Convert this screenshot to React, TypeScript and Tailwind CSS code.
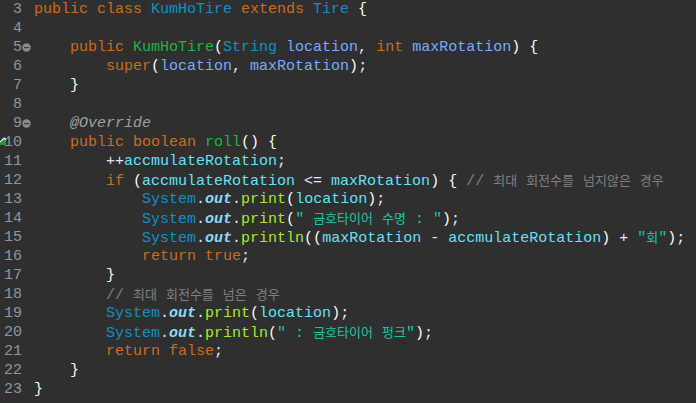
import React from "react";

type Tok = [string, string?];

const kw = "text-[#cc6c1d]";
const cls = "text-[#1290c3]";
const mdecl = "text-[#1eb540]";
const mcall = "text-[#a7ec21]";
const field = "text-[#66e1f8]";
const sfield = "text-[#8ddaf8] italic font-bold";
const param = "text-[#79abff]";
const str = "text-[#17c6a3]";
const cmt = "text-[#808080]";
const ann = "text-[#a0a0a0] italic";
const br = "text-[#f9faf4]";
const op = "text-[#e6e6fa]";

const lines: { n: number; fold?: boolean; mark?: boolean; toks: Tok[] }[] = [
  { n: 3, toks: [["public class ", kw], ["KumHoTire", cls], [" "], ["extends ", kw], ["Tire", cls], [" "], ["{", br]] },
  { n: 4, toks: [] },
  {
    n: 5,
    fold: true,
    toks: [
      ["    "], ["public ", kw], ["KumHoTire", mdecl], ["(", br], ["String", cls], [" "], ["location", param],
      [", ", op], ["int ", kw], ["maxRotation", param], [")", br], [" "], ["{", br],
    ],
  },
  { n: 6, toks: [["        "], ["super", kw], ["(", br], ["location", param], [", ", op], ["maxRotation", param], [")", br], [";", op]] },
  { n: 7, toks: [["    "], ["}", br]] },
  { n: 8, toks: [] },
  { n: 9, fold: true, toks: [["    "], ["@Override", ann]] },
  { n: 10, mark: true, toks: [["    "], ["public boolean ", kw], ["roll", mdecl], ["()", br], [" "], ["{", br]] },
  { n: 11, toks: [["        "], ["++", op], ["accmulateRotation", field], [";", op]] },
  {
    n: 12,
    toks: [
      ["        "], ["if ", kw], ["(", br], ["accmulateRotation", field], [" <= ", op], ["maxRotation", field],
      [")", br], [" "], ["{", br], [" "], ["// 최대 회전수를 넘지않은 경우", cmt],
    ],
  },
  {
    n: 13,
    toks: [["            "], ["System", cls], [".", op], ["out", sfield], [".", op], ["print", mcall], ["(", br], ["location", field], [")", br], [";", op]],
  },
  {
    n: 14,
    toks: [
      ["            "], ["System", cls], [".", op], ["out", sfield], [".", op], ["print", mcall], ["(", br],
      ['" 금호타이어 수명 : "', str], [")", br], [";", op],
    ],
  },
  {
    n: 15,
    toks: [
      ["            "], ["System", cls], [".", op], ["out", sfield], [".", op], ["println", mcall], ["((", br],
      ["maxRotation", field], [" - ", op], ["accmulateRotation", field], [")", br], [" + ", op], ['"회"', str], [")", br], [";", op],
    ],
  },
  { n: 16, toks: [["            "], ["return true", kw], [";", op]] },
  { n: 17, toks: [["        "], ["}", br]] },
  { n: 18, toks: [["        "], ["// 최대 회전수를 넘은 경우", cmt]] },
  {
    n: 19,
    toks: [["        "], ["System", cls], [".", op], ["out", sfield], [".", op], ["print", mcall], ["(", br], ["location", field], [")", br], [";", op]],
  },
  {
    n: 20,
    toks: [
      ["        "], ["System", cls], [".", op], ["out", sfield], [".", op], ["println", mcall], ["(", br],
      ['" : 금호타이어 펑크"', str], [")", br], [";", op],
    ],
  },
  { n: 21, toks: [["        "], ["return false", kw], [";", op]] },
  { n: 22, toks: [["    "], ["}", br]] },
  { n: 23, toks: [["}", br]] },
];

// split hangul runs so they get the CJK font at the editor's smaller size
function renderText(text: string) {
  const parts = text.split(/([\uAC00-\uD7A3]+)/);
  return parts.map((p, i) =>
    /[\uAC00-\uD7A3]/.test(p) ? (
      <span key={i} className="font-['Noto_Sans_CJK_KR',sans-serif] text-[13px]">
        {p}
      </span>
    ) : (
      p
    )
  );
}

function FoldIcon() {
  return (
    <svg width="9" height="9" viewBox="0 0 9 9">
      <circle cx="4.5" cy="4.5" r="4.2" fill="#8c8c8c" />
      <rect x="2" y="4" width="5" height="1.2" fill="#3a3a3a" />
    </svg>
  );
}

function OverrideMark() {
  return (
    <svg width="7" height="9" viewBox="0 0 7 9" className="absolute left-0 top-[4px]">
      <path d="M0 8 L0 5 L4 1 L6 3 L6 8 Z" fill="#1f9a3e" />
      <path d="M0 5 L4 1 L6 3" stroke="#f0f7f0" strokeWidth="1.2" fill="none" />
    </svg>
  );
}

export default function App() {
  return (
    <div className="w-[696px] h-[403px] overflow-hidden bg-[#2f2f2f] font-['Liberation_Mono',monospace] text-[15px] leading-[19px] text-[#d9e8f7]">
      {lines.map((line) => (
        <div key={line.n} className="flex h-[19px] items-center">
          <div className="relative flex w-[34px] shrink-0 items-center">
            {line.mark && <OverrideMark />}
            <span className="w-[22px] text-right text-[#8a98a3]">{line.n}</span>
            {line.fold && <FoldIcon />}
          </div>
          <div className="whitespace-pre">
            {line.toks.map((t, i) => (
              <span key={i} className={t[1]}>
                {renderText(t[0])}
              </span>
            ))}
          </div>
        </div>
      ))}
    </div>
  );
}
